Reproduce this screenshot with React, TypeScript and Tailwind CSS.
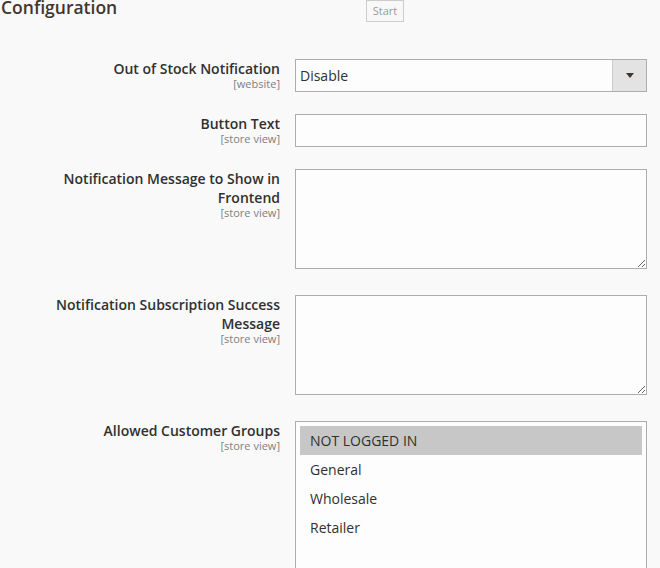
import React from "react";

const font = { fontFamily: '"Open Sans", "Liberation Sans", sans-serif' };

function Label({ lines, scope }: { lines: string; scope: string }) {
  return (
    <div className="w-[250px] ml-[30px] mr-[15px] text-right shrink-0">
      <div className="text-[14px] leading-[19px] font-semibold text-[#303030]">{lines}</div>
      <div className="text-[11px] leading-[12px] text-[#808080]">[{scope}]</div>
    </div>
  );
}

export default function App() {
  return (
    <div style={font} className="w-[660px] h-[568px] overflow-hidden bg-[#f9f9f9]">
      <div className="flex items-start h-[22px]">
        <div className="text-[17.5px] leading-[18px] -mt-[2px] font-semibold text-[#41362f] pl-[1px] w-[366px]">
          Configuration
        </div>
        <div className="w-[38px] h-[22px] border border-[#cccccc] bg-[#f8f8f8] text-[11px] text-[#9a9a9a] flex items-center justify-center">
          Start
        </div>
      </div>

      <div className="mt-[37px] flex flex-col">
        <div className="flex mb-[22px]">
          <Label lines="Out of Stock Notification" scope="website" />
          <div className="w-[352px] h-[33px] border border-[#adadad] bg-[#fdfdfd] flex">
            <div className="flex-1 pl-[4px] flex items-center text-[14px] text-[#303030]">Disable</div>
            <div className="w-[34px] h-full bg-[#e3e3e3] border-l border-[#cccccc] flex items-center justify-center">
              <svg width="8" height="5" viewBox="0 0 8 5">
                <path d="M0 0 L8 0 L4 5 Z" fill="#41362f" />
              </svg>
            </div>
          </div>
        </div>

        <div className="flex mb-[22px]">
          <Label lines="Button Text" scope="store view" />
          <div className="w-[352px] h-[33px] border border-[#adadad] bg-[#fdfdfd]" />
        </div>

        <div className="flex mb-[26px]">
          <Label lines="Notification Message to Show in Frontend" scope="store view" />
          <textarea
            className="block w-[352px] h-[100px] border border-[#adadad] bg-[#fdfdfd] outline-none"
            defaultValue=""
          />
        </div>

        <div className="flex mb-[26px]">
          <Label lines="Notification Subscription Success Message" scope="store view" />
          <textarea
            className="block w-[352px] h-[100px] border border-[#adadad] bg-[#fdfdfd] outline-none"
            defaultValue=""
          />
        </div>

        <div className="flex">
          <Label lines="Allowed Customer Groups" scope="store view" />
          <div className="w-[352px] h-[170px] border border-[#adadad] bg-[#fdfdfd] p-[4px]">
            {["NOT LOGGED IN", "General", "Wholesale", "Retailer"].map((o, i) => (
              <div
                key={o}
                className={`h-[29px] pl-[10px] flex items-center text-[14px] text-[#303030] ${i === 0 ? "bg-[#c7c7c7]" : ""}`}
              >
                {o}
              </div>
            ))}
          </div>
        </div>
      </div>
    </div>
  );
}
